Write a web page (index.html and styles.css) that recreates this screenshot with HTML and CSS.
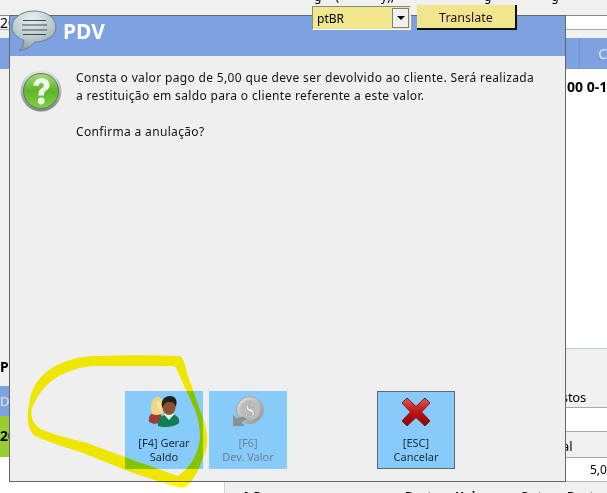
FILE: index.html
```html
<!DOCTYPE html>
<html lang="pt-BR">
<head>
<meta charset="utf-8">
<title>PDV</title>
<link rel="stylesheet" href="styles.css">
</head>
<body>
<div class="app">
  <div class="top-strip"><span class="d1">g</span><span class="d2">(</span><span class="d3">y),</span><span class="d4">g</span><span class="d5">g</span></div>
  <div class="panels">
    <section class="panel-left">
      <div class="field">20</div>
      <div class="band"></div>
      <div class="head"></div>
      <div class="list-white"></div>
      <div class="label-p">Pr</div>
      <div class="head-d">Da</div>
      <div class="row-green">20</div>
      <div class="list-fill"></div>
    </section>
    <section class="panel-right">
      <div class="field"></div>
      <div class="band"></div>
      <div class="head"><span class="head-cell"></span><span class="head-c">C</span></div>
      <div class="list-right"><span class="amount">00 0-1</span></div>
      <div class="title-stos">Custos</div>
      <div class="blank"></div>
      <div class="title-al">Total</div>
      <div class="value"><span>5,00</span></div>
      <div class="footer-cols"><span class="f1">A Pagar</span><span class="f2">Deste</span><span class="f3">Hoje</span><span class="f4">Outro</span><span class="f5">Deste</span></div>
    </section>
  </div>

  <div class="dialog">
    <header class="dialog-head">
      <svg class="bubble" viewBox="0 0 46 42" width="46" height="42">
        <defs>
          <radialGradient id="bub" cx="0.45" cy="0.2" r="0.9">
            <stop offset="0" stop-color="#e8eff0"/>
            <stop offset="0.55" stop-color="#b9c8cc"/>
            <stop offset="1" stop-color="#7f9097"/>
          </radialGradient>
        </defs>
        <path d="M23 1C35 1 45 7.500 45 17C45 26 35 32 24 32C21 36 14 40.500 8 40.500C11 38 13 34 13 30.500C6 28 1 23 1 17C1 7.500 11 1 23 1Z" fill="url(#bub)" stroke="#6d7f88" stroke-width="1"/>
        <g stroke="#3f4a50" stroke-width="1">
          <path d="M12 10.500H35"/><path d="M11 15H36"/><path d="M11 20H36"/><path d="M12 24.500H35"/>
        </g>
      </svg>
      <h1 class="dialog-title">PDV</h1>
      <div class="translate">
        <div class="lang"><span class="lang-name">ptBR</span><span class="lang-arrow"><i></i></span></div>
        <button class="translate-btn" type="button">Translate</button>
      </div>
    </header>
    <div class="dialog-body">
      <svg class="question" viewBox="0 0 42 42" width="42" height="42">
        <defs>
          <linearGradient id="qg" x1="0" y1="0" x2="0" y2="1">
            <stop offset="0" stop-color="#a5dc7c"/>
            <stop offset="0.5" stop-color="#5db52b"/>
            <stop offset="1" stop-color="#7fd23f"/>
          </linearGradient>
          <linearGradient id="qr" x1="0" y1="0" x2="0" y2="1">
            <stop offset="0" stop-color="#dfe3e3"/>
            <stop offset="1" stop-color="#7d8586"/>
          </linearGradient>
        </defs>
        <circle cx="21" cy="21" r="20.500" fill="url(#qr)"/>
        <circle cx="21" cy="21" r="17.500" fill="url(#qg)" stroke="#5f7a55" stroke-width="1"/>
        <path d="M13.500 15.500C14 10.500 17.500 8 21.500 8C26.500 8 29.500 11 29.500 15C29.500 18.500 27 20 25.500 21.200C24 22.300 24 23.500 24 25.500H18.500C18.500 22.500 18.800 20.500 21 18.800C22.800 17.400 23.800 16.800 23.800 15.200C23.800 13.800 22.800 12.800 21.300 12.800C19.800 12.800 18.900 13.900 18.700 15.800Z" fill="#f2f8ee"/>
        <circle cx="21.200" cy="31" r="3.400" fill="#f2f8ee"/>
      </svg>
      <div class="message">
        <p>Consta o valor pago de 5,00 que deve ser devolvido ao cliente. Será realizada<br>a restituição em saldo para o cliente referente a este valor.</p>
        <p class="confirm">Confirma a anulação?</p>
      </div>
    </div>
    <div class="actions">
      <button class="action" type="button">
        <svg class="action-icon" viewBox="0 0 32 32" width="32" height="32">
          <path d="M1 26C0 20 3 17 7 16C12 16 15 20 15 26L6 28Z" fill="#a23a35"/>
          <path d="M4 18C2 10 3 2 9 1C14 0 17 6 16 16C13 19 8 20 4 18Z" fill="#f0d77e"/>
          <path d="M9 5C12 6 14 9 13.500 14C11 15 9 12 9 5Z" fill="#f6dfc0"/>
          <path d="M10 30C9 24 12 19 21 18C29 18 32 22 31 27C27 31 15 32 10 30Z" fill="#0f7f53"/>
          <path d="M16 18.500L21 24L26 18.500L24 16H18Z" fill="#eef5ee"/>
          <ellipse cx="21" cy="11" rx="6.500" ry="8" fill="#8a5230"/>
          <path d="M14.500 12C12 5 16 0 22 0C27.500 0 30 4 27.800 11C27 7.500 25 5.500 21 6C18 6 16 7.500 14.500 12Z" fill="#20201e"/>
        </svg>
        <span>[F4] Gerar<br>Saldo</span>
      </button>
      <button class="action action-off" type="button" disabled>
        <svg class="action-icon" viewBox="0 0 32 32" width="32" height="32">
          <defs>
            <linearGradient id="coin" x1="0" y1="0" x2="1" y2="1">
              <stop offset="0" stop-color="#e6e6e6"/>
              <stop offset="1" stop-color="#8f8f8f"/>
            </linearGradient>
          </defs>
          <circle cx="18" cy="14" r="13.500" fill="url(#coin)" stroke="#a4a4a4"/>
          <circle cx="18" cy="14" r="10" fill="#bdbdbd"/>
          <text class="coin-sign" x="18" y="20.500" text-anchor="middle">$</text>
          <path d="M1 30V19L5 22.500C8 20 13 20 16 24C13 23.500 11 24.500 9.500 26.500L13 30Z" fill="#8e8e8e"/>
        </svg>
        <span>[F6]<br>Dev. Valor</span>
      </button>
      <button class="action action-cancel" type="button">
        <svg class="action-icon" viewBox="0 0 32 32" width="32" height="32">
          <defs>
            <linearGradient id="xg" x1="0" y1="0" x2="0" y2="1">
              <stop offset="0" stop-color="#d95a5a"/>
              <stop offset="0.5" stop-color="#c11414"/>
              <stop offset="1" stop-color="#8f0000"/>
            </linearGradient>
          </defs>
          <path d="M7 2L16 10.500L25 2L30 7L21.500 16L30 25L25 30L16 21.500L7 30L2 25L10.500 16L2 7Z" fill="url(#xg)" stroke="#7d1010" stroke-linejoin="round"/>
        </svg>
        <span>[ESC]<br>Cancelar</span>
      </button>
    </div>
  </div>

  <svg class="scribble" viewBox="0 0 607 493" width="607" height="493">
    <path fill-rule="evenodd" fill="#fff600" d="M180 356C150 355 120 355 100 356C85 356 75 358 67 361C55 365 50 369 43 375C35 383 31 392 30 400C28 408 27 415 28 421C29 428 31 433 35 436C50 443 65 447 83 453L133 473L177 487C181 488 184 488 187 486C194 479 199 470 202 460C206 452 207 446 207 440C207 430 204 420 200 410L187 373C185 365 184 359 180 356ZM177 370C176 367 175 366 172 366L100 366C88 366 78 368 70 371C60 375 53 379 47 385C41 391 36 398 33 406C31 411 31 415 32 418C34 424 38 428 43 430C58 436 72 439 87 443L133 460L178 476C186 470 192 463 195 456C198 449 200 442 200 436C200 427 198 418 195 410Z"/>
  </svg>
</div>
</body>
</html>
```

FILE: styles.css
```css
* { box-sizing: border-box; }
html, body { margin: 0; padding: 0; }
body { font-family: "Noto Sans", "Liberation Sans", sans-serif; font-size: 12px; color: #000; }

.app { position: relative; width: 607px; height: 493px; overflow: hidden; background: #f0f0f0; }

/* background window */
.top-strip { height: 16px; display: flex; overflow: hidden; border-bottom: 1px solid #8a8a8a; background: #f0f0f0; line-height: 12px; }
.top-strip span { margin-top: -9px; }
.d1 { margin-left: 314px; }
.d2 { margin-left: 14px; }
.d3 { margin-left: 42px; }
.d4 { margin-left: 90px; }
.d5 { margin-left: 60px; }

.panels { display: flex; height: 477px; }
.panel-left { flex: none; width: 225px; display: flex; flex-direction: column; border-right: 1px solid #c5d5ea; }
.panel-right { flex: 1; min-width: 0; display: flex; flex-direction: column; }

.field { height: 14px; background: #fff; border-bottom: 1px solid #a8a8a8; line-height: 13px; font-size: 14px; }
.band { height: 8px; background: #f0f0f0; }
.head { height: 31px; background: #7ea2e0; display: flex; }
.list-white { height: 279px; background: #f0f0f0; }
.label-p { height: 38px; padding-top: 10px; font-weight: 700; font-size: 14px; line-height: 18px; background: #f0f0f0; }
.head-d { height: 30px; background: #7ea2e0; color: #e3ecf9; line-height: 30px; font-size: 13px; }
.row-green { height: 41px; background: #9acd32; font-weight: 700; font-size: 14px; line-height: 40px; }
.list-fill { flex: 1; background: #fff; }

.head-cell { width: 360px; border-right: 1px solid #6f90c8; }
.head-c { padding-left: 18px; color: #dfe8f7; line-height: 31px; font-size: 14px; }
.list-right { height: 280px; background: #fff; border-bottom: 1px solid #c0c8d4; padding: 8px 0 0 342px; font-weight: 700; font-size: 14px; line-height: 20px; white-space: nowrap; overflow: hidden; }
.title-stos { height: 59px; padding-top: 39px; padding-left: 321px; font-size: 13px; line-height: 18px; border-bottom: 1px solid #a8a8a8; letter-spacing: -0.2px; }
.blank { height: 24px; background: #fff; border-bottom: 1px solid #a8a8a8; }
.title-al { height: 26px; padding: 5px 0 0 318px; font-size: 13px; line-height: 18px; border-bottom: 1px solid #a8a8a8; }
.value { height: 24px; background: #fff; border-bottom: 1px solid #b5b5b5; padding-left: 365px; font-size: 12px; line-height: 23px; white-space: nowrap; overflow: hidden; }
.footer-cols { flex: 1; min-height: 0; display: flex; font-weight: 700; font-size: 12px; line-height: 16px; padding-top: 7px; white-space: nowrap; overflow: hidden; }
.f1 { margin-left: 17px; width: 163px; flex: none; }
.f2 { width: 50px; flex: none; }
.f3 { width: 65px; flex: none; }
.f4 { width: 47px; flex: none; }

/* dialog */
.dialog { position: absolute; left: 9px; top: 15px; width: 557px; height: 467px; display: flex; flex-direction: column; background: #efefef; border: 1px solid #666; }
.dialog-head { position: relative; height: 40px; flex: none; background: #7ea2e0; padding-left: 53px; }
.bubble { position: absolute; left: 1px; top: -6px; }
.dialog-title { margin: 0; color: #fff; font-size: 21px; font-weight: 700; line-height: 30px; font-family: "Noto Sans", "Liberation Sans", sans-serif; }
.translate { position: absolute; left: 302px; top: -11px; display: flex; gap: 6px; align-items: flex-start; }
.lang { width: 99px; height: 24px; margin-top: 1px; display: flex; align-items: stretch; justify-content: space-between; background: #f0e68c; border: 1px solid; border-color: #8a8a8a #f8f8f8 #f8f8f8 #8a8a8a; padding: 1px; }
.lang-name { padding-left: 3px; font-size: 12px; line-height: 22px; }
.lang-arrow { width: 17px; background: #f0f0f0; border: 1px solid #808080; display: flex; align-items: center; justify-content: center; }
.lang-arrow i { width: 0; height: 0; border: 4px solid transparent; border-top-color: #000; border-bottom: 0; }
.translate-btn { width: 100px; height: 25px; margin: 0; padding: 2px 0 0; background: #f0e68c; border: 0; border-right: 2px solid #111; border-bottom: 2px solid #111; color: #2a1020; font: 12.500px/21px "Noto Sans", "Liberation Sans", sans-serif; }

.dialog-body { flex: 1; display: flex; padding: 14px 0 0 10px; gap: 14px; }
.question { flex: none; }
.message { margin-top: -1px; font-size: 12px; line-height: 18px; letter-spacing: 0.34px; color: #111; white-space: nowrap; }
.message p { margin: 0; }
.message .confirm { margin-top: 18px; }

.actions { flex: none; display: flex; padding: 0 0 12px 115px; }
.action { width: 78px; height: 78px; margin: 0 6px 0 0; padding: 5px 0 0; display: flex; flex-direction: column; align-items: center; background: #87cbfb; border: 0; color: #1a2a35; font: 11px/14px "Noto Sans", "Liberation Sans", sans-serif; }
.action-icon { flex: none; margin-bottom: 8px; }
.action-off { color: #6f8092; }
.action-cancel { margin-left: 84px; border: 1px solid #666; padding-top: 4px; }
.coin-sign { font: 700 19px "Liberation Serif", serif; fill: #ececec; stroke: #8a8a8a; stroke-width: 0.4; }

.scribble { position: absolute; left: 0; top: 0; mix-blend-mode: multiply; pointer-events: none; }
```
